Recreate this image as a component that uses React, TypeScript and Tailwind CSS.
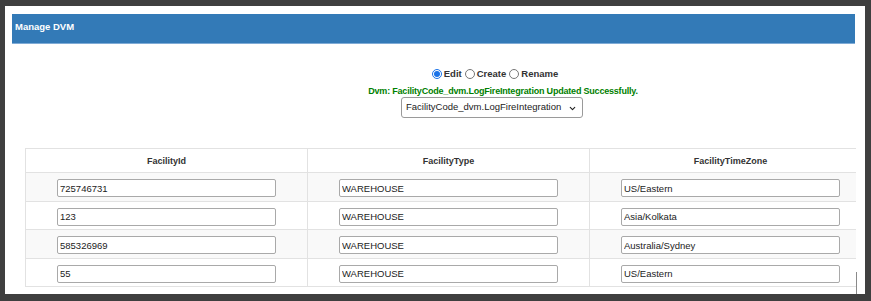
import { ChevronDown } from "lucide-react";

const rows = [
  { id: "725746731", type: "WAREHOUSE", tz: "US/Eastern" },
  { id: "123", type: "WAREHOUSE", tz: "Asia/Kolkata" },
  { id: "585326969", type: "WAREHOUSE", tz: "Australia/Sydney" },
  { id: "55", type: "WAREHOUSE", tz: "US/Eastern" },
];

const columns = ["FacilityId", "FacilityType", "FacilityTimeZone"];

export default function App() {
  return (
    <div
      className="w-[871px] h-[301px] bg-[#3f3f3f] pt-[6px] pl-[5px] pr-[6px] pb-[7px] text-[#333]"
      style={{ fontFamily: '"Liberation Sans", Arial, sans-serif' }}
    >
      <div className="relative h-[288px] bg-white pt-[8px] pl-[7px] pr-[10px] overflow-hidden">
        {/* Panel heading */}
        <div className="h-[30px] bg-[#337ab7] border-b border-[#7fabd6] pl-[3px] pt-[7px] text-[9.5px] leading-[12px]">
          <span className="font-bold text-white">Manage DVM</span>
        </div>

        {/* Mode + status + select */}
        <div className="ml-[345px] w-[280px] mt-[24px] flex flex-col items-center">
          <div className="flex items-center text-[9.5px] leading-[12px] font-bold h-[12px] mr-[4px]">
            <input type="radio" name="mode" defaultChecked className="w-[10px] h-[10px] m-0 mr-[2px] accent-[#1a73e8]" />
            <span className="mr-[3px]">Edit</span>
            <input type="radio" name="mode" className="w-[10px] h-[10px] m-0 mr-[2px]" />
            <span className="mr-[3px]">Create</span>
            <input type="radio" name="mode" className="w-[10px] h-[10px] m-0 mr-[2px]" />
            <span>Rename</span>
          </div>
          <p className="mt-[5px] ml-[12px] whitespace-nowrap text-[9px] tracking-[-0.2px] leading-[12px] font-bold text-[#008000]">
            Dvm: FacilityCode_dvm.LogFireIntegration Updated Successfully.
          </p>
          <div className="relative mt-0 mr-[10px] w-[182px] h-[21px] border border-[#9a9a9a] rounded-[3px] flex items-center pl-[4px] text-[9.5px] text-[#222]">
            <span className="whitespace-nowrap">FacilityCode_dvm.LogFireIntegration</span>
            <ChevronDown className="absolute right-[5px] top-[6px] w-[9px] h-[9px]" strokeWidth={3} />
          </div>
        </div>

        {/* Table */}
        <div className="relative ml-[13px] mt-[30px] w-[831px] overflow-hidden">
          <table className="w-[846px] table-fixed border-collapse border border-[#dedede]">
            <thead>
              <tr className="h-[24px]">
                {columns.map((c) => (
                  <th key={c} className="w-[282px] border border-[#e2e2e2] pt-[2px] text-[9px] font-bold text-[#333] text-center">
                    {c}
                  </th>
                ))}
              </tr>
            </thead>
            <tbody>
              {rows.map((r, i) => (
                <tr key={i} className={`h-[28.5px] ${i % 2 === 0 ? "bg-[#f9f9f9]" : "bg-white"}`}>
                  {[r.id, r.type, r.tz].map((v, j) => (
                    <td key={j} className="border border-[#e2e2e2] text-center">
                      <input
                        readOnly
                        value={v}
                        className="w-[219px] h-[18px] border border-[#a9a9a9] rounded-[2px] bg-white px-[2px] text-[9.5px] text-[#222] outline-none"
                      />
                    </td>
                  ))}
                </tr>
              ))}
            </tbody>
          </table>
        </div>

        {/* scrollbar edge */}
        <div className="absolute left-[851px] top-[266px] w-px h-[22px] bg-[#8a8a8a]" />
      </div>
    </div>
  );
}
